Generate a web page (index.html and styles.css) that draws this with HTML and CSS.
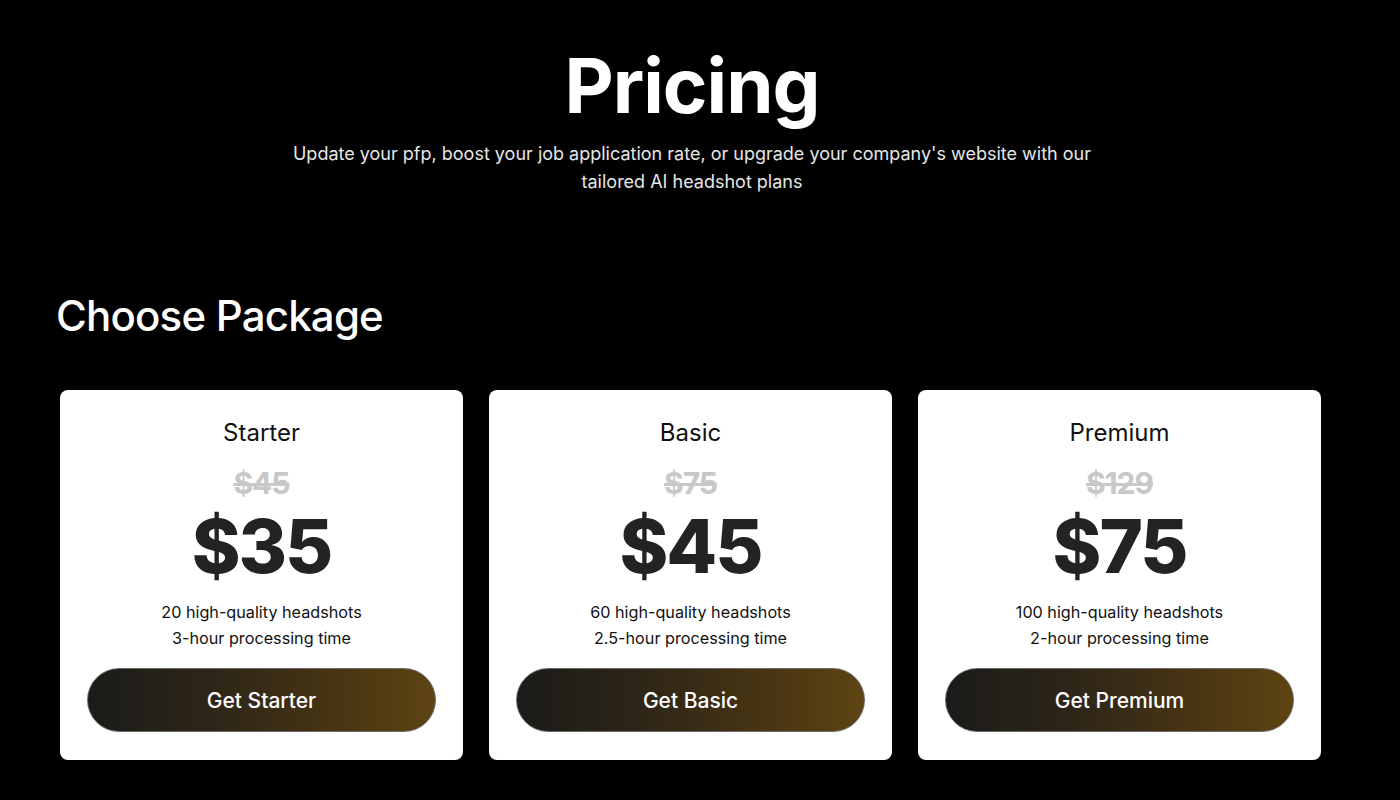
FILE: index.html
```html
<!DOCTYPE html>
<html lang="en">
<head>
<meta charset="utf-8">
<title>Pricing</title>
<link rel="stylesheet" href="styles.css">
</head>
<body>
<header class="hero">
  <h1 class="hero-title">Pricing</h1>
  <p class="hero-sub">Update your pfp, boost your job application rate, or upgrade your company's website with our<br>tailored AI headshot plans</p>
</header>
<section class="packages">
  <h2 class="packages-title">Choose Package</h2>
  <div class="cards">
    <div class="card">
      <div class="card-name">Starter</div>
      <div class="card-old">$45</div>
      <div class="card-price">$35</div>
      <div class="card-features">20 high-quality headshots<br>3-hour processing time</div>
      <button class="card-btn">Get Starter</button>
    </div>
    <div class="card">
      <div class="card-name">Basic</div>
      <div class="card-old">$75</div>
      <div class="card-price">$45</div>
      <div class="card-features">60 high-quality headshots<br>2.5-hour processing time</div>
      <button class="card-btn">Get Basic</button>
    </div>
    <div class="card">
      <div class="card-name">Premium</div>
      <div class="card-old">$129</div>
      <div class="card-price">$75</div>
      <div class="card-features">100 high-quality headshots<br>2-hour processing time</div>
      <button class="card-btn">Get Premium</button>
    </div>
  </div>
</section>
</body>
</html>
```

FILE: styles.css
```css
* { box-sizing: border-box; }
html, body { margin: 0; padding: 0; background: #000; }
body {
  font-family: "Inter", "Liberation Sans", sans-serif;
  color: #fff;
  width: 1400px;
  height: 800px;
  overflow: hidden;
}
.hero {
  display: flex;
  flex-direction: column;
  align-items: center;
  padding-top: 40px;
  padding-right: 16px;
}
.hero-title {
  margin: 0;
  font-size: 76px;
  line-height: 90px;
  font-weight: 700;
  letter-spacing: -1px;
}
.hero-sub {
  margin: 10px 0 0;
  font-size: 18px;
  line-height: 28px;
  text-align: center;
  color: #e6e6e6;
  letter-spacing: 0;
}
.packages {
  padding: 0 0 0 60px;
  margin-top: 94px;
}
.packages-title {
  margin: 0 0 0 -4px;
  font-size: 42px;
  line-height: 52px;
  font-weight: 500;
  letter-spacing: -0.8px;
}
.cards {
  display: grid;
  grid-template-columns: repeat(3, 403px);
  gap: 26px;
  margin-top: 48px;
}
.card {
  background: #fff;
  border-radius: 8px;
  height: 370px;
  padding: 29px 27px 28px;
  display: flex;
  flex-direction: column;
  align-items: center;
  color: #1a1a1a;
}
.card-name {
  font-size: 24px;
  line-height: 28px;
  font-weight: 400;
  color: #111;
}
.card-old {
  margin-top: 19px;
  font-size: 30px;
  line-height: 34px;
  font-weight: 700;
  color: #c8c8c8;
  text-decoration: line-through;
  text-decoration-thickness: 3px;
  letter-spacing: -1px;
}
.card-price {
  margin-top: 1px;
  font-size: 74px;
  line-height: 90px;
  font-weight: 800;
  color: #222324;
  letter-spacing: -2px;
}
.card-features {
  margin-top: 8px;
  font-size: 16.2px;
  line-height: 26px;
  text-align: center;
  color: #111;
}
.card-btn {
  margin-top: auto;
  width: 100%;
  height: 64px;
  border-radius: 32px;
  border: 1px solid #6b6b6b;
  background: linear-gradient(90deg, #1b1b1a 0%, #2d2518 35%, #4a3612 75%, #5e4412 100%);
  color: #fff;
  font-family: inherit;
  font-size: 21px;
  font-weight: 500;
  cursor: pointer;
}
```
